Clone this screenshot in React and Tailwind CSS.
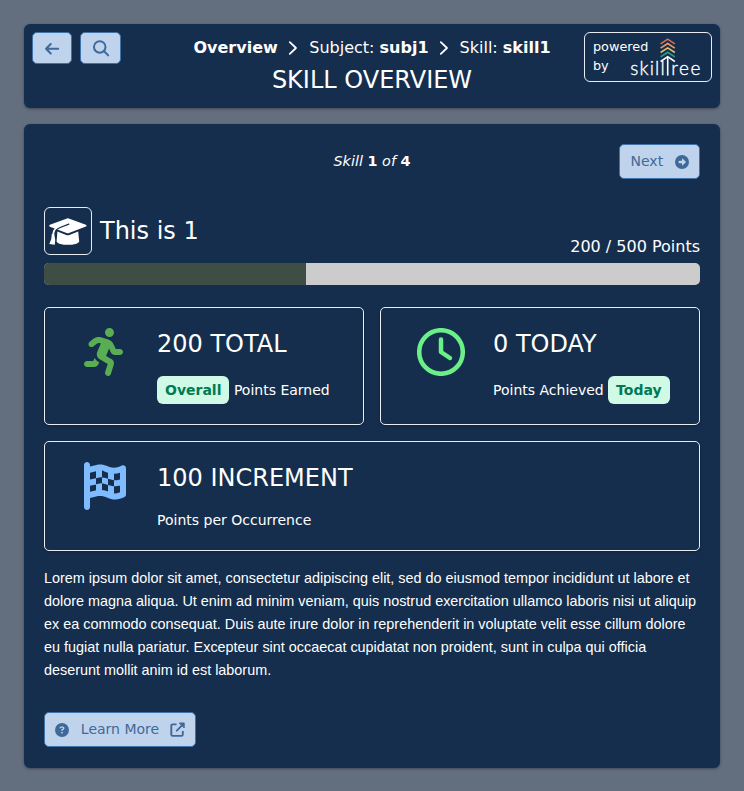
import React from 'react';
import { FaRunning } from 'react-icons/fa';
import { FaFlagCheckered, FaCircleRight, FaCircleQuestion } from 'react-icons/fa6';

const BTN = 'flex items-center rounded-[5px] border border-[#3f72a8] bg-[#bfd4ec] text-[#3f6998]';

function Stroke({ d, className, w = 2, box = '0 0 20 20', children }) {
  return (
    <svg viewBox={box} className={className} fill="none" stroke="currentColor" strokeWidth={w} strokeLinecap="round" strokeLinejoin="round">
      {d && <path d={d} />}
      {children}
    </svg>
  );
}

function Chevron() {
  return <Stroke box="0 0 10 16" className="h-4 w-[10px]" w={1.8} d="M1.8 2.2 L8 8 L1.8 13.8" />;
}

function GraduationCap() {
  return (
    <svg viewBox="0 0 38 27" className="h-[27px] w-[38px]">
      <path fill="currentColor" d="M18 .4 Q18.8 .1 19.7 .4 L36.9 6.8 Q38.2 7.7 36.9 8.6 L20 15.1 Q18.8 15.6 17.6 15.1 L.9 8.8 Q-.5 7.8 .9 6.8 Z" />
      <path fill="currentColor" d="M8.4 13.4 L17.2 16.9 Q18.8 17.5 20.4 16.9 L29.2 13.4 L30.2 23.4 C29.6 25.4 25 26.8 18.9 26.8 S8.2 25.4 7.6 23.4 Z" />
      <path fill="none" stroke="#162e4d" strokeWidth="1.2" strokeLinecap="round" d="M19.8 6.1 L10.5 9.8 Q7.4 11.1 6.4 14" />
      <path fill="none" stroke="currentColor" strokeWidth="1.8" d="M7.8 9.4 Q4.3 12 4.1 18" />
      <path fill="currentColor" d="M2.8 16 H5.2 Q6.8 21.8 5.8 26.7 L.3 25.9 Q3 21.5 2.8 16 Z" />
    </svg>
  );
}

function Logo() {
  return (
    <svg viewBox="0 0 72 42" className="-ml-px h-[42px] w-[72px] shrink-0" fill="none">
      <g strokeWidth="1.6">
        <path stroke="#db6b55" d="M31.6 6.8 L38.7 2.2 L45.8 6.8" />
        <path stroke="#ee9a62" d="M31.6 11.1 L38.7 6.5 L45.8 11.1" />
        <path stroke="#e8bf65" d="M31.6 15.5 L38.7 10.9 L45.8 15.5" />
        <path stroke="#2f9b8e" d="M31.6 19.9 L38.7 15.3 L45.8 19.9" />
        <path stroke="#ffffff" d="M31.6 24.5 L38.7 19.7 L45.8 24.5" />
        <path stroke="#ffffff" d="M38.7 20 V38.6" />
      </g>
      <g fill="#ffffff" stroke="#ffffff" strokeWidth="0.35" fontFamily="Lato, sans-serif" fontWeight="300" fontSize="19">
        <text x="1.2" y="38.4" textLength="34.5" lengthAdjust="spacing">skill</text>
        <text x="42.3" y="38.4" textLength="29" lengthAdjust="spacing">ree</text>
      </g>
    </svg>
  );
}

function Header() {
  return (
    <header className="flex h-[84px] justify-between rounded-md bg-[#162e4d] p-2 shadow-[0_1px_3px_rgba(0,0,0,0.35)]">
      <div className="flex w-[128px] gap-2">
        <button className={`${BTN} h-8 w-10 justify-center`}>
          <Stroke className="h-[18px] w-[18px]" w={2.3} d="M16.8 10.8 H3.4 M8.6 5.6 L3.4 10.8 L8.6 16" />
        </button>
        <button className={`${BTN} h-8 w-[41px] justify-center`}>
          <Stroke className="h-[18px] w-[18px]" w={2.2}>
            <circle cx="8.6" cy="8.8" r="6.4" />
            <path d="M13.4 13.6 L18 18.2" />
          </Stroke>
        </button>
      </div>
      <div className="flex flex-col items-center">
        <nav className="mt-1 flex h-6 items-center whitespace-nowrap leading-6">
          <b>Overview</b>
          <span className="ml-[10.5px] mr-[11px]"><Chevron /></span>
          <span>Subject: <b>subj1</b></span>
          <span className="ml-[10px] mr-[11px]"><Chevron /></span>
          <span>Skill: <b>skill1</b></span>
        </nav>
        <h1 className="mt-[5px] text-2xl leading-[30px]">SKILL OVERVIEW</h1>
      </div>
      <div className="flex h-[50px] w-[128px] rounded-md border border-[#e8edf3] pl-2 pt-1">
        <div className="flex w-[37px] flex-col text-[12.8px] leading-[19px]">
          <span>powered</span>
          <span>by</span>
        </div>
        <Logo />
      </div>
    </header>
  );
}

function Card({ icon, title, children, className = '' }) {
  return (
    <div className={`flex rounded-[5px] border border-[#e8edf3] pt-5 shadow-[0_1px_3px_rgba(0,0,0,0.3)] ${className}`}>
      <div className="w-[112px] shrink-0">{icon}</div>
      <div>
        <div className="whitespace-nowrap text-2xl leading-8">{title}</div>
        <div className="mt-4 flex h-7 items-center whitespace-nowrap text-sm">{children}</div>
      </div>
    </div>
  );
}

function Tag({ children, className }) {
  return <span className={`flex h-7 items-center rounded-md bg-[#d0fae5] font-bold text-[#007a55] ${className}`}>{children}</span>;
}

export default function App() {
  return (
    <div className="flex h-[791px] flex-col gap-4 bg-[#636e7e] px-6 pt-6 text-white [font-family:'DejaVu_Sans',sans-serif]">
      <Header />
      <main className="h-[643.5px] rounded-md bg-[#162e4d] px-5 pt-5 shadow-[0_1px_3px_rgba(0,0,0,0.35)]">
        <div className="grid h-[35px] grid-cols-3 items-center text-sm">
          <div />
          <div className="text-center text-[14.4px]"><i>Skill</i> <b>1</b> <i>of</i> <b>4</b></div>
          <button className={`${BTN} h-[35px] w-[81px] justify-between justify-self-end px-[10px]`}>
            <span className="pb-[2px] pl-[0.5px]">Next</span>
            <FaCircleRight className="h-[14px] w-[14px]" />
          </button>
        </div>
        <div className="mt-7 flex h-12 items-center">
          <div className="flex h-12 w-12 items-center justify-center rounded-md border border-[#e8edf3]">
            <GraduationCap />
          </div>
          <h2 className="ml-2 text-2xl leading-8">This is 1</h2>
          <div className="ml-auto mt-8 leading-6">200 / 500 Points</div>
        </div>
        <div className="mt-2 h-[22px] overflow-hidden rounded-[5px] bg-[#cccccc]">
          <div className="h-full w-2/5 bg-[#3f4e44]" />
        </div>
        <div className="mt-[22px] grid grid-cols-2 gap-4">
          <Card className="h-[118px]" title="200 TOTAL" icon={<FaRunning className="ml-[39px] h-12 w-[39px] text-[#59ad52]" />}>
            <Tag className="mr-[4.45px] px-2">Overall</Tag>Points Earned
          </Card>
          <Card
            className="h-[118px]"
            title="0 TODAY"
            icon={
              <Stroke box="0 0 48 48" w={4.5} className="ml-9 h-12 w-12 text-[#6bf088]">
                <circle cx="24" cy="24" r="21.8" />
                <path d="M24 11.5 V24 L33 30" />
              </Stroke>
            }
          >
            Points Achieved<Tag className="ml-[4.4px] px-2">Today</Tag>
          </Card>
          <Card className="col-span-2 h-[110px]" title="100 INCREMENT" icon={<FaFlagCheckered className="ml-[39px] h-12 w-[42px] text-[#7fbbff]" />}>
            <span className="-mt-[9px]">Points per Occurrence</span>
          </Card>
        </div>
        <p className="mt-4 text-[14.4px] leading-[23px] [font-family:'Liberation_Sans',sans-serif]">
          Lorem ipsum dolor sit amet, consectetur adipiscing elit, sed do eiusmod tempor incididunt ut labore et dolore magna aliqua. Ut enim ad minim veniam, quis nostrud exercitation ullamco laboris nisi ut aliquip ex ea commodo consequat. Duis aute irure dolor in reprehenderit in voluptate velit esse cillum dolore eu fugiat nulla pariatur. Excepteur sint occaecat cupidatat non proident, sunt in culpa qui officia deserunt mollit anim id est laborum.
        </p>
        <button className={`${BTN} mt-[30px] h-[35px] w-[152px] justify-between px-[10px] text-sm`}>
          <FaCircleQuestion className="h-[14px] w-[14px]" />
          <span className="pb-[2px] pl-px">Learn More</span>
          <svg viewBox="0 0 15 15" className="h-[15px] w-[15px]" fill="none" stroke="currentColor" strokeWidth="1.9" strokeLinecap="round" strokeLinejoin="round">
            <path d="M5.8 2.4 H2.6 Q1.3 2.4 1.3 3.7 V12.6 Q1.3 13.9 2.6 13.9 H11.5 Q12.8 13.9 12.8 12.6 V9.6" />
            <path d="M6.8 8.6 L12.5 2.9" />
            <path fill="currentColor" strokeWidth="1" d="M9.6 1 H14.2 V5.6 Z" />
          </svg>
        </button>
      </main>
    </div>
  );
}
